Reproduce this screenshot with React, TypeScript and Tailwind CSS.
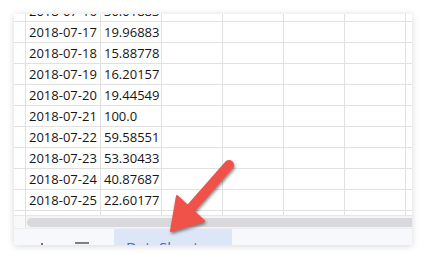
import React from "react";

const rows: [string, string][] = [
  ["2018-07-17", "19.96883"],
  ["2018-07-18", "15.88778"],
  ["2018-07-19", "16.20157"],
  ["2018-07-20", "19.44549"],
  ["2018-07-21", "100.0"],
  ["2018-07-22", "59.58551"],
  ["2018-07-23", "53.30433"],
  ["2018-07-24", "40.87687"],
  ["2018-07-25", "22.60177"],
];

const font = { fontFamily: '"Open Sans", "Liberation Sans", sans-serif' };

function Row({ a, b, h, partial }: { a: string; b: string; h: string; partial?: boolean }) {
  const cell = `border-r border-[#e1e1e1] ${h} flex ${partial ? "items-end" : "items-center"} overflow-hidden`;
  return (
    <div className="flex border-b border-[#e1e1e1] shrink-0">
      <div className={`${cell} w-[12px]`} />
      <div className={`${cell} w-[75px] pl-[3px]`}>
        <span className="text-[13px] leading-[20px] text-[#151515] whitespace-nowrap">{a}</span>
      </div>
      <div className={`${cell} w-[61px] pl-[3px]`}>
        <span className="text-[13px] leading-[20px] text-[#151515] whitespace-nowrap">{b}</span>
      </div>
      <div className={`${cell} w-[61px]`} />
      <div className={`${cell} w-[61px]`} />
      <div className={`${cell} w-[61px]`} />
      <div className={`${cell} w-[61px]`} />
      <div className={`${h} w-[6px]`} />
    </div>
  );
}

export default function App() {
  return (
    <div className="relative w-[427px] h-[260px] bg-white overflow-hidden" style={font}>
      <div className="pt-[14px] pl-[14px]">
        <div className="w-[398px] h-[231px] bg-white flex flex-col overflow-hidden shadow-[0_1px_7px_rgba(0,0,0,0.16)]">
          <Row a="2018-07-16" b="30.01883" h="h-[7px]" partial />
          {rows.map(([a, b]) => (
            <Row key={a} a={a} b={b} h="h-[20px]" />
          ))}
          <div className="flex shrink-0 h-[4px]">
            <div className="w-[12px] border-r border-[#e1e1e1]" />
            <div className="w-[75px] border-r border-[#e1e1e1]" />
            <div className="w-[61px] border-r border-[#e1e1e1]" />
            <div className="w-[61px] border-r border-[#e1e1e1]" />
            <div className="w-[61px] border-r border-[#e1e1e1]" />
            <div className="w-[61px] border-r border-[#e1e1e1]" />
            <div className="w-[61px] border-r border-[#e1e1e1]" />
          </div>
          <div className="flex shrink-0 h-[13px] items-center border-t border-[#e6e6e6]">
            <div className="w-[12px] h-full border-r border-[#e1e1e1] bg-[#f9f9fa]" />
            <div className="flex-1 h-full flex items-center pl-[1px] bg-[#f4f4f6]">
              <div className="w-full h-[9px] rounded-l-full bg-[#d9d9dd]" />
            </div>
          </div>
          <div className="flex shrink-0 h-[17px] bg-[#f7f8fb] border-t border-[#eceef2] overflow-hidden">
            <div className="w-[100px] relative">
              <svg className="absolute left-[21px] top-[13px]" width="14" height="14" viewBox="0 0 14 14">
                <path d="M7 1v12M1 7h12" stroke="#555" strokeWidth="1.6" />
              </svg>
              <svg className="absolute left-[61px] top-[13px]" width="14" height="12" viewBox="0 0 14 12">
                <path d="M0 1h14M0 5.5h14M0 10h14" stroke="#555" strokeWidth="1.6" />
              </svg>
            </div>
            <div className="w-[118px] bg-[#dde6f6] pl-[12px] pt-[11px]">
              <span className="block text-[15px] leading-none text-[#3a6cd6] whitespace-nowrap">DataSheet</span>
            </div>
          </div>
        </div>
      </div>
      <svg className="absolute left-0 top-0 pointer-events-none" width="427" height="260" viewBox="0 0 427 260" style={{ filter: "drop-shadow(1px 2px 1.5px rgba(0,0,0,0.45))" }}>
        <line x1="229" y1="165" x2="192" y2="207" stroke="#f0524a" strokeWidth="10" strokeLinecap="round" />
        <polygon points="171,231 177,196 204,221" fill="#f0524a" stroke="#f0524a" strokeWidth="2" strokeLinejoin="round" />
      </svg>
    </div>
  );
}
